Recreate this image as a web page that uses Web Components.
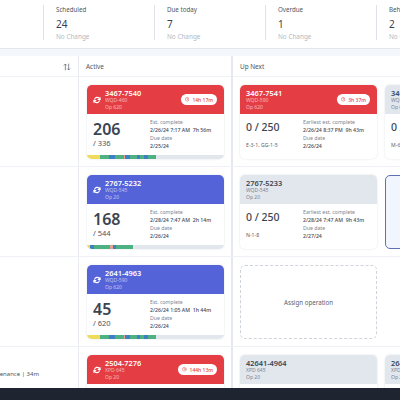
<!DOCTYPE html>
<html>
<head>
<meta charset="utf-8">
<style>
  html, body { margin: 0; height: 100%; overflow: hidden; background: #fff; }
  body { font-family: "Noto Sans", "Open Sans", sans-serif; color: #3b4552; }
  #page { display: flex; flex-direction: column; width: 400px; height: 400px; overflow: hidden; }
  #stats { display: flex; flex: none; height: 49px; padding-top: 5px; padding-left: 43px; box-sizing: border-box; background: #fff; border-bottom: 1px solid #e3e7ee; }
  #band { flex: none; height: 7px; background: #f4f7fb; }
  #board { flex: 1; min-height: 0; overflow: hidden; }
</style>
</head>
<body>

<template id="stat-tpl">
  <style>
    :host { display: flex; flex-direction: column; flex: none; width: 111px; height: 35px; box-sizing: border-box; border-left: 1px solid #dfe3e9; padding-left: 12px; }
    .label { font-size: 6.2px; line-height: 10px; color: #4d5663; }
    .value { font-size: 10px; line-height: 14px; margin-top: 2px; color: #39424e; }
    .note { font-size: 6.4px; line-height: 9px; margin-top: 1px; color: #b3b9c2; }
  </style>
  <div class="label"></div>
  <div class="value"></div>
  <div class="note">No Change</div>
</template>

<template id="row-tpl">
  <style>
    :host { display: grid; grid-template-columns: 79px 154px 1fr; height: 90px; box-sizing: border-box; border-bottom: 1px solid #eef1f5; }
    .side { display: flex; justify-content: flex-end; overflow: hidden; border-right: 1px solid #e8ebf0; font-size: 6px; color: #4d5663; white-space: nowrap; }
    .active { display: flex; padding: 8px 8px 0 8px; border-right: 2px solid #e5e8ee; }
    .next { display: flex; gap: 8px; padding: 8px 0 0 7px; overflow: hidden; }
  </style>
  <div class="side"><slot name="side"></slot></div>
  <div class="active"><slot name="active"></slot></div>
  <div class="next"><slot></slot></div>
</template>

<template id="head-tpl">
  <style>
    :host { display: grid; grid-template-columns: 79px 154px 1fr; height: 21px; box-sizing: border-box; border-bottom: 1px solid #eef1f5; font-size: 6.4px; color: #4d5663; line-height: 21px; }
    div { box-sizing: border-box; }
    .side { display: flex; justify-content: flex-end; align-items: center; padding-right: 7px; border-right: 1px solid #e8ebf0; }
    .active { padding-left: 7px; border-right: 2px solid #e5e8ee; }
    .next { padding-left: 7px; }
    svg { width: 8px; height: 8px; }
  </style>
  <div class="side">
    <svg viewBox="0 0 12 12" fill="none" stroke="#5b6470" stroke-width="1.1"><path d="M3.5 11V1.5M1.2 3.8 3.5 1.5l2.3 2.3M8.5 1v9.5M6.2 8.2l2.3 2.3 2.3-2.3"/></svg>
  </div>
  <div class="active">Active</div>
  <div class="next">Up Next</div>
</template>

<template id="card-tpl">
  <style>
    :host { display: flex; flex-direction: column; flex: none; width: 137px; height: 74px; box-sizing: border-box; border-radius: 5px; overflow: hidden; background: #fff; box-shadow: 0 0 2px rgba(60, 75, 100, .18); }
    header { display: flex; align-items: center; flex: none; height: 29px; box-sizing: border-box; padding: 0 7px 0 6px; background: #e2e7ee; color: #3b4552; }
    :host([tone=red]) header { background: #e53d44; color: #fff; }
    :host([tone=blue]) header { background: #5463d8; color: #fff; }
    .spin { display: none; width: 8px; height: 8px; margin: 0 4px 0 0; flex: none; }
    :host([running]) .spin { display: block; }
    .ids { flex: 1; min-width: 0; white-space: nowrap; padding-top: 1px; }
    .id { font-size: 7.4px; line-height: 8px; font-weight: 600; }
    .sub { font-size: 5px; line-height: 6.8px; opacity: .62; }
    :host([tone=red]) .sub, :host([tone=blue]) .sub { opacity: .6; }
    .pill { display: none; align-items: center; gap: 3px; flex: none; height: 11px; padding: 0 4px; border-radius: 6px; background: #fff; color: #e53d44; font-size: 5px; font-weight: 500; white-space: nowrap; }
    .pill svg { width: 4.5px; height: 4.5px; }
    :host([timer]) .pill { display: flex; }
    main { display: flex; flex: 1; min-height: 0; padding: 0 0 0 6px; }
    .qty { flex: none; width: 57px; display: flex; flex-direction: column; white-space: nowrap; }
    .count { font-size: 16px; line-height: 20px; margin-top: 4.5px; font-weight: 600; color: #3b4552; }
    .total { font-size: 7.5px; line-height: 11px; margin-top: -.5px; color: #4a5360; }
    .ratio { font-size: 10.5px; line-height: 18px; margin-top: 4px; font-weight: 500; color: #3b4552; }
    .tools { font-size: 5.2px; line-height: 8px; margin-top: 5px; color: #5a6370; }
    .info { flex: 1; min-width: 0; padding-top: 5.2px; white-space: nowrap; font-size: 5.2px; line-height: 7.5px; }
    .cap { color: #7d8590; }
    .val { color: #3f4854; font-weight: 500; margin-bottom: 1px; }
    .bar { display: flex; flex: none; height: 4px; background: #e2e7ee; }
    .bar i { display: block; height: 100%; }
    :host(:not([active])) .bar { display: none; }
  </style>
  <header>
    <svg class="spin" viewBox="0 0 24 24" fill="none" stroke="#fff" stroke-width="3.6" stroke-linecap="round" stroke-linejoin="round"><path d="M21 5v5.5h-5.5"/><path d="M3 19v-5.5h5.5"/><path d="M5 9.5a8 8 0 0 1 13.4-2.7L21 10.5"/><path d="M19 14.5a8 8 0 0 1-13.4 2.7L3 13.5"/></svg>
    <div class="ids">
      <div class="id"></div>
      <div class="sub line1"></div>
      <div class="sub line2"></div>
    </div>
    <div class="pill">
      <svg viewBox="0 0 12 12" fill="none" stroke="#e53d44" stroke-width="1.2" stroke-linecap="round"><circle cx="6" cy="6" r="5"/><path d="M6 3v3.2l2 1.2"/></svg>
      <span class="time"></span>
    </div>
  </header>
  <main>
    <div class="qty"></div>
    <div class="info">
      <div class="cap est"></div>
      <div class="val done"></div>
      <div class="cap">Due date</div>
      <div class="val due"></div>
    </div>
  </main>
  <div class="bar"></div>
</template>

<template id="empty-tpl">
  <style>
    :host { display: flex; align-items: center; justify-content: center; flex: none; width: 137px; height: 74px; box-sizing: border-box; border: 1px dashed #cfd4db; border-radius: 5px; font-size: 6.2px; color: #5a6370; }
  </style>
  <slot></slot>
</template>

<template id="picked-tpl">
  <style>
    :host { display: block; flex: none; width: 137px; height: 74px; box-sizing: border-box; border: 1px solid #5f6fb8; border-radius: 5px; background: #f1f5fd; }
  </style>
</template>

<template id="strip-tpl">
  <style>
    :host { display: block; flex: none; height: 12px; background: #1e2530; }
  </style>
</template>

<div id="page">
  <div id="stats">
    <op-stat label="Scheduled" value="24"></op-stat>
    <op-stat label="Due today" value="7"></op-stat>
    <op-stat label="Overdue" value="1"></op-stat>
    <op-stat label="Behind" value="2"></op-stat>
  </div>
  <div id="band"></div>
  <div id="board">
    <board-head></board-head>

    <board-row>
      <op-card slot="active" tone="red" running active timer="14h 17m" op-id="3467-7540" order="WQD-460" step="Op 620"
        count="206" total="336" done="2/26/24 7:17 AM&nbsp; 7h 56m" due="2/25/24"
        bar="y13 g8.5 b6 g9 s1.5 b4.5 g7 b3.5 g4 b3.5 g8.5"></op-card>
      <op-card tone="red" timer="3h 37m" op-id="3467-7541" order="WQD-590" step="Op 620"
        ratio="0 / 250" tools="E-3-1, GG-1-5" done="2/26/24 8:37 PM&nbsp; 9h 43m" due="2/26/24"></op-card>
      <op-card op-id="3467-7542" order="WQD-590" step="Op 620"
        ratio="0 / 250" tools="M-6-2" done="2/26/24 8:37 PM&nbsp; 9h 43m" due="2/26/24"></op-card>
    </board-row>

    <board-row>
      <op-card slot="active" tone="blue" running active op-id="2767-5232" order="WQD-545" step="Op 20"
        count="168" total="544" done="2/28/24 7:47 AM&nbsp; 2h 14m" due="2/26/24"
        bar="y3 b4 g16 s3 b3 g17"></op-card>
      <op-card op-id="2767-5233" order="WQD-545" step="Op 20"
        ratio="0 / 250" tools="N-1-8" done="2/28/24 7:47 AM&nbsp; 9h 43m" due="2/27/24"></op-card>
      <picked-slot></picked-slot>
    </board-row>

    <board-row>
      <op-card slot="active" tone="blue" running active op-id="2641-4963" order="WQD-590" step="Op 620"
        count="45" total="620" done="2/26/24 1:05 AM&nbsp; 1h 44m" due="2/26/24"
        bar="y13 g8.5 b6 g9 s1.5 b4.5 g7 b3.5 g4 b3.5 g8.5"></op-card>
      <empty-slot>Assign operation</empty-slot>
    </board-row>

    <board-row>
      <span slot="side" style="padding:22px 39px 0 0;line-height:10px;margin-right:0">Maintenance | 34m</span>
      <op-card slot="active" tone="red" running active timer="144h 13m" op-id="2504-7276" order="XPD 645" step="Op 20"
        count="0" total="0" done="" due=""></op-card>
      <op-card op-id="42641-4964" order="XPD 645" step="Op 20"
        ratio="0 / 250" tools="" done="" due=""></op-card>
      <op-card op-id="2641-4965" order="XPD 645" step="Op 20"
        ratio="0 / 250" tools="" done="" due=""></op-card>
    </board-row>
  </div>
  <bottom-strip></bottom-strip>
</div>

<script>
  function plain(name, tplId) {
    customElements.define(name, class extends HTMLElement {
      constructor() {
        super();
        this.attachShadow({ mode: 'open' });
        this.shadowRoot.appendChild(document.getElementById(tplId).content.cloneNode(true));
      }
    });
  }

  plain('board-head', 'head-tpl');
  plain('board-row', 'row-tpl');
  plain('empty-slot', 'empty-tpl');
  plain('picked-slot', 'picked-tpl');
  plain('bottom-strip', 'strip-tpl');

  class OpStat extends HTMLElement {
    constructor() {
      super();
      this.attachShadow({ mode: 'open' });
      this.shadowRoot.appendChild(document.getElementById('stat-tpl').content.cloneNode(true));
    }

    connectedCallback() {
      this.shadowRoot.querySelector('.label').textContent = this.getAttribute('label');
      this.shadowRoot.querySelector('.value').textContent = this.getAttribute('value');
    }
  }
  customElements.define('op-stat', OpStat);

  const BAR_COLORS = { y: '#f0dc5c', g: '#4db183', b: '#3f80c4', s: '#e8a08c' };

  class OpCard extends HTMLElement {
    constructor() {
      super();
      this.attachShadow({ mode: 'open' });
      this.shadowRoot.appendChild(document.getElementById('card-tpl').content.cloneNode(true));
    }

    connectedCallback() {
      const root = this.shadowRoot;
      const put = (sel, text) => { root.querySelector(sel).innerHTML = text; };

      put('.id', this.getAttribute('op-id'));
      put('.line1', this.getAttribute('order'));
      put('.line2', this.getAttribute('step'));
      put('.time', this.getAttribute('timer') || '');
      put('.est', this.hasAttribute('ratio') ? 'Earliest est. complete' : 'Est. complete');
      put('.done', this.getAttribute('done'));
      put('.due', this.getAttribute('due'));

      const qty = root.querySelector('.qty');
      if (this.hasAttribute('ratio')) {
        qty.innerHTML = `<div class="ratio">${this.getAttribute('ratio')}</div>
          <div class="tools">${this.getAttribute('tools')}</div>`;
      } else {
        qty.innerHTML = `<div class="count">${this.getAttribute('count')}</div>
          <div class="total">/ ${this.getAttribute('total')}</div>`;
      }

      // segments look like "y13 g8.5": colour letter + width in px
      const bar = root.querySelector('.bar');
      (this.getAttribute('bar') || '').split(' ').filter(Boolean).forEach(seg => {
        const piece = document.createElement('i');
        piece.style.background = BAR_COLORS[seg[0]];
        piece.style.width = seg.slice(1) + 'px';
        bar.appendChild(piece);
      });
    }
  }
  customElements.define('op-card', OpCard);
</script>
</body>
</html>
